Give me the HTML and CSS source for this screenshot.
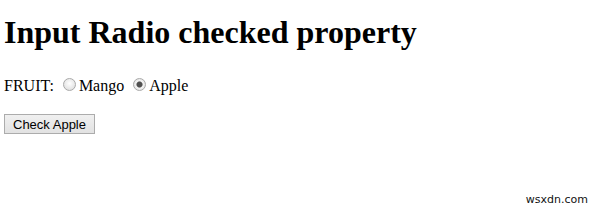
FILE: index.html
```html
<!DOCTYPE html>
<html lang="en">
<head>
    <meta charset="UTF-8">
    <title>Input Radio checked property</title>
    <link rel="stylesheet" href="styles.css">
</head>
<body>
    <h1>Input Radio checked property</h1>
    <form class="fruit-form">
        FRUIT:
        <input type="radio" name="fruit" id="mango" value="mango"><label for="mango">Mango</label>
        <input type="radio" name="fruit" id="apple" value="apple" checked><label for="apple">Apple</label>
    </form>
    <div class="actions">
        <button type="button" class="check-btn">Check Apple</button>
    </div>
    <div class="watermark">wsxdn.com</div>
</body>
</html>
```

FILE: styles.css
```css
body {
    font-family: "Liberation Serif", "Times New Roman", serif;
    font-size: 16px;
    margin: 0 4px;
    color: #000;
    background-color: #fff;
}
h1 {
    font-size: 32px;
    margin: 14px 0 26px;
}
.fruit-form {
    margin: 0;
}
input[type="radio"] {
    appearance: none;
    -webkit-appearance: none;
    box-sizing: border-box;
    width: 13px;
    height: 13px;
    margin: 0 3px 0 5px;
    border: 1px solid #a9a9a9;
    border-radius: 50%;
    background: radial-gradient(circle at 50% 40%, #ffffff, #d8d8d8);
    vertical-align: baseline;
}
input[type="radio"]:checked {
    background: radial-gradient(circle, #505050 0 2.5px, #9a9a9a 3px, #f4f4f4 3.5px, #d8d8d8);
}
.actions {
    display: flex;
    margin-top: 19px;
}
.check-btn {
    font-family: "Liberation Sans", Arial, sans-serif;
    font-size: 13px;
    box-sizing: border-box;
    height: 20px;
    padding: 0 8px;
    border: 1px solid #acacac;
    border-radius: 0;
    background: linear-gradient(#f0f0f0, #e2e2e2);
    color: #000;
}
.watermark {
    position: absolute;
    right: 12px;
    bottom: 3px;
    font-family: "DejaVu Sans", sans-serif;
    font-size: 11px;
    color: #111;
}
```
